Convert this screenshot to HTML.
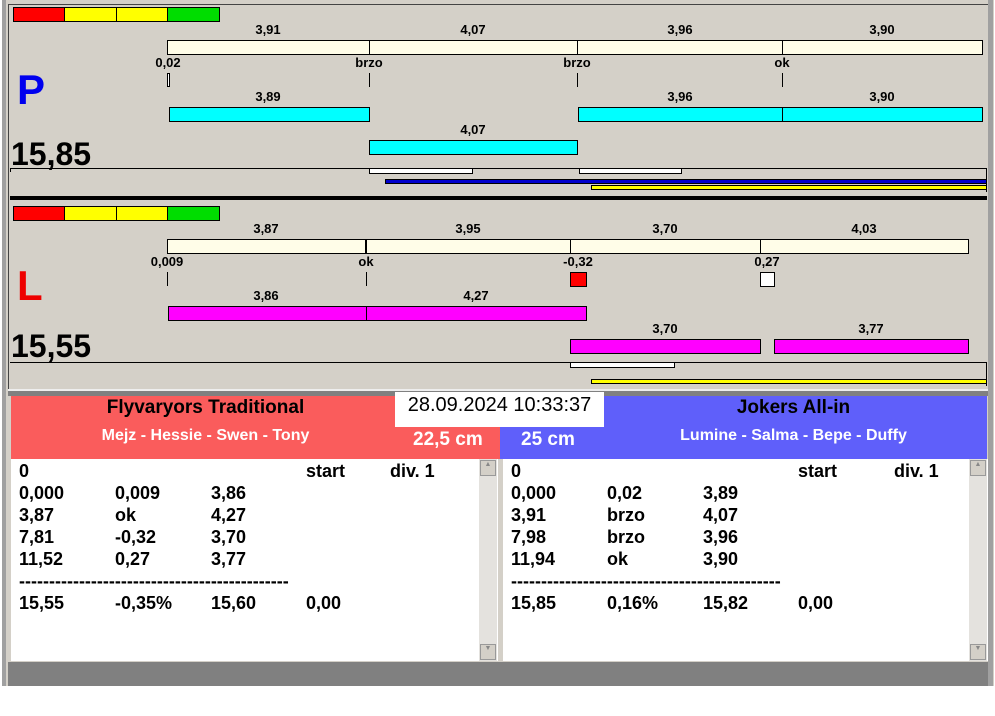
<!DOCTYPE html>
<html><head><meta charset="utf-8"><style>
*{margin:0;padding:0;box-sizing:border-box}
body{width:995px;height:716px;background:#fff;position:relative;overflow:hidden;font-family:"Liberation Sans",Arial,sans-serif}
div{position:absolute}
.r{border:1px solid #000}
.c{background:#fffde8}.cy{background:#00ffff}.m{background:#ff00ff}
.l{font-size:13px;font-weight:bold;color:#000;transform:translateX(-50%);white-space:nowrap;line-height:14px}
.t{width:1px;background:#000}
.h{height:1px;background:#000}
.tx{font-size:18px;font-weight:bold;line-height:22px;white-space:nowrap}
.d{overflow:hidden;white-space:nowrap;font-size:18px;font-weight:bold;line-height:22px;width:270px}
</style></head><body>
<div style="left:2px;top:0;width:992px;height:686px;background:#d4d0c8"></div>
<div style="left:2px;top:0;width:4px;height:686px;background:#a0a0a0"></div>
<div style="left:988px;top:0;width:5px;height:686px;background:#a0a0a0"></div>
<div style="left:8px;top:4px;width:980px;height:1px;background:#444"></div>
<div style="left:8px;top:4px;width:1px;height:388px;background:#444"></div>
<div style="left:8px;top:662px;width:980px;height:24px;background:#808080"></div>

<!-- P panel -->
<div class="r" style="left:13px;top:7px;width:52px;height:15px;background:#f00"></div>
<div class="r" style="left:64px;top:7px;width:53px;height:15px;background:#ff0"></div>
<div class="r" style="left:116px;top:7px;width:52px;height:15px;background:#ff0"></div>
<div class="r" style="left:167px;top:7px;width:53px;height:15px;background:#0d0"></div>
<div class="l" style="left:268px;top:23px">3,91</div><div class="l" style="left:473px;top:23px">4,07</div><div class="l" style="left:680px;top:23px">3,96</div><div class="l" style="left:882px;top:23px">3,90</div>
<div class="r c" style="left:167px;top:40px;width:816px;height:15px"></div>
<div class="t" style="left:369px;top:40px;height:15px"></div><div class="t" style="left:577px;top:40px;height:15px"></div><div class="t" style="left:782px;top:40px;height:15px"></div>
<div class="l" style="left:168px;top:56px">0,02</div><div class="l" style="left:369px;top:56px">brzo</div><div class="l" style="left:577px;top:56px">brzo</div><div class="l" style="left:782px;top:56px">ok</div>
<div class="r" style="left:167px;top:73px;width:3px;height:14px;background:#fff"></div>
<div class="t" style="left:369px;top:73px;height:14px"></div><div class="t" style="left:577px;top:73px;height:14px"></div><div class="t" style="left:782px;top:73px;height:14px"></div>
<div style="left:17px;top:66px;font-size:42px;font-weight:bold;color:#0000ee;line-height:48px">P</div>
<div class="l" style="left:268px;top:90px">3,89</div><div class="l" style="left:680px;top:90px">3,96</div><div class="l" style="left:882px;top:90px">3,90</div>
<div class="r cy" style="left:169px;top:107px;width:201px;height:15px"></div>
<div class="r cy" style="left:578px;top:107px;width:205px;height:15px"></div>
<div class="r cy" style="left:782px;top:107px;width:201px;height:15px"></div>
<div class="l" style="left:473px;top:123px">4,07</div>
<div class="r cy" style="left:369px;top:140px;width:209px;height:15px"></div>
<div style="left:11px;top:136px;font-size:32px;font-weight:bold;line-height:36px">15,85</div>
<div class="h" style="left:10px;top:168px;width:977px"></div>
<div class="t" style="left:10px;top:168px;height:4px"></div><div class="t" style="left:986px;top:168px;height:24px"></div>
<div class="r" style="left:369px;top:168px;width:104px;height:6px;background:#fff"></div>
<div class="r" style="left:579px;top:168px;width:103px;height:6px;background:#fff"></div>
<div class="r" style="left:385px;top:179px;width:602px;height:5px;background:#0000cc"></div>
<div class="r" style="left:591px;top:185px;width:396px;height:5px;background:#ff0"></div>
<div style="left:10px;top:196px;width:977px;height:4px;background:#000"></div>

<!-- L panel -->
<div class="r" style="left:13px;top:206px;width:52px;height:15px;background:#f00"></div>
<div class="r" style="left:64px;top:206px;width:53px;height:15px;background:#ff0"></div>
<div class="r" style="left:116px;top:206px;width:52px;height:15px;background:#ff0"></div>
<div class="r" style="left:167px;top:206px;width:53px;height:15px;background:#0d0"></div>
<div class="l" style="left:266px;top:222px">3,87</div><div class="l" style="left:468px;top:222px">3,95</div><div class="l" style="left:665px;top:222px">3,70</div><div class="l" style="left:864px;top:222px">4,03</div>
<div class="r c" style="left:167px;top:239px;width:802px;height:15px"></div>
<div style="left:365px;top:239px;width:2px;height:15px;background:#000"></div><div class="t" style="left:570px;top:239px;height:15px"></div><div class="t" style="left:760px;top:239px;height:15px"></div>
<div class="l" style="left:167px;top:255px">0,009</div><div class="l" style="left:366px;top:255px">ok</div><div class="l" style="left:578px;top:255px">-0,32</div><div class="l" style="left:767px;top:255px">0,27</div>
<div class="t" style="left:167px;top:272px;height:14px"></div><div class="t" style="left:366px;top:272px;height:14px"></div>
<div class="r" style="left:570px;top:272px;width:17px;height:15px;background:#f00"></div>
<div class="r" style="left:760px;top:272px;width:15px;height:15px;background:#fff"></div>
<div style="left:17px;top:262px;font-size:42px;font-weight:bold;color:#ee0000;line-height:48px">L</div>
<div class="l" style="left:266px;top:289px">3,86</div><div class="l" style="left:476px;top:289px">4,27</div>
<div class="r m" style="left:168px;top:306px;width:199px;height:15px"></div>
<div class="r m" style="left:366px;top:306px;width:221px;height:15px"></div>
<div class="l" style="left:665px;top:322px">3,70</div><div class="l" style="left:871px;top:322px">3,77</div>
<div class="r m" style="left:570px;top:339px;width:191px;height:15px"></div>
<div class="r m" style="left:774px;top:339px;width:195px;height:15px"></div>
<div style="left:11px;top:328px;font-size:32px;font-weight:bold;line-height:36px">15,55</div>
<div class="h" style="left:10px;top:362px;width:977px"></div>
<div class="t" style="left:986px;top:362px;height:24px"></div>
<div class="r" style="left:570px;top:362px;width:105px;height:6px;background:#fff"></div>
<div class="r" style="left:591px;top:379px;width:396px;height:5px;background:#ff0"></div>
<div style="left:8px;top:389px;width:980px;height:2px;background:#eee"></div>
<div style="left:8px;top:391px;width:980px;height:5px;background:#808080"></div>

<!-- headers -->
<div style="left:11px;top:396px;width:489px;height:63px;background:#fa5c5c"></div>
<div style="left:500px;top:396px;width:487px;height:63px;background:#5f5ffa"></div>
<div style="left:11px;top:396px;width:389px;text-align:center;font-size:19px;font-weight:bold;line-height:24px">Flyvaryors Traditional</div>
<div style="left:11px;top:426px;width:389px;text-align:center;font-size:16px;font-weight:bold;color:#fff;line-height:20px">Mejz - Hessie - Swen - Tony</div>
<div style="left:395px;top:392px;width:209px;height:35px;background:#fff;font-size:20px;line-height:26px;text-align:center">28.09.2024 10:33:37</div>
<div style="left:413px;top:428px;font-size:19px;font-weight:bold;color:#fff;line-height:24px">22,5 cm</div>
<div style="left:521px;top:428px;font-size:19px;font-weight:bold;color:#fff;line-height:24px">25 cm</div>
<div style="left:600px;top:396px;width:387px;text-align:center;font-size:19px;font-weight:bold;line-height:24px">Jokers All-in</div>
<div style="left:600px;top:426px;width:387px;text-align:center;font-size:16px;font-weight:bold;color:#fff;line-height:20px">Lumine - Salma - Bepe - Duffy</div>

<!-- lists -->
<div style="left:11px;top:459px;width:487px;height:202px;background:#fff"></div>
<div style="left:479px;top:459px;width:18px;height:202px;background:#e4e2de"></div>
<div style="left:480px;top:460px;width:16px;height:16px;background:#d4d0c8;border:1px solid #999;font-size:7px;text-align:center;color:#888">▲</div>
<div style="left:480px;top:644px;width:16px;height:16px;background:#d4d0c8;border:1px solid #999;font-size:7px;text-align:center;color:#888">▼</div>
<div style="left:499px;top:459px;width:4px;height:202px;background:#d4d0c8"></div>
<div style="left:503px;top:459px;width:485px;height:202px;background:#fff"></div>
<div style="left:969px;top:459px;width:18px;height:202px;background:#e4e2de"></div>
<div style="left:970px;top:460px;width:16px;height:16px;background:#d4d0c8;border:1px solid #999;font-size:7px;text-align:center;color:#888">▲</div>
<div style="left:970px;top:644px;width:16px;height:16px;background:#d4d0c8;border:1px solid #999;font-size:7px;text-align:center;color:#888">▼</div>

<div class="tx" style="left:19px;top:460px">0<br>0,000<br>3,87<br>7,81<br>11,52<br><br>15,55</div>
<div class="d" style="left:19px;top:570px">--------------------------------------------------------------</div>
<div class="tx" style="left:115px;top:482px">0,009<br>ok<br>-0,32<br>0,27<br><br>-0,35%</div>
<div class="tx" style="left:211px;top:482px">3,86<br>4,27<br>3,70<br>3,77<br><br>15,60</div>
<div class="tx" style="left:306px;top:460px">start<br><br><br><br><br><br>0,00</div>
<div class="tx" style="left:390px;top:460px">div. 1</div>

<div class="tx" style="left:511px;top:460px">0<br>0,000<br>3,91<br>7,98<br>11,94<br><br>15,85</div>
<div class="d" style="left:511px;top:570px">--------------------------------------------------------------</div>
<div class="tx" style="left:607px;top:482px">0,02<br>brzo<br>brzo<br>ok<br><br>0,16%</div>
<div class="tx" style="left:703px;top:482px">3,89<br>4,07<br>3,96<br>3,90<br><br>15,82</div>
<div class="tx" style="left:798px;top:460px">start<br><br><br><br><br><br>0,00</div>
<div class="tx" style="left:894px;top:460px">div. 1</div>
</body></html>
